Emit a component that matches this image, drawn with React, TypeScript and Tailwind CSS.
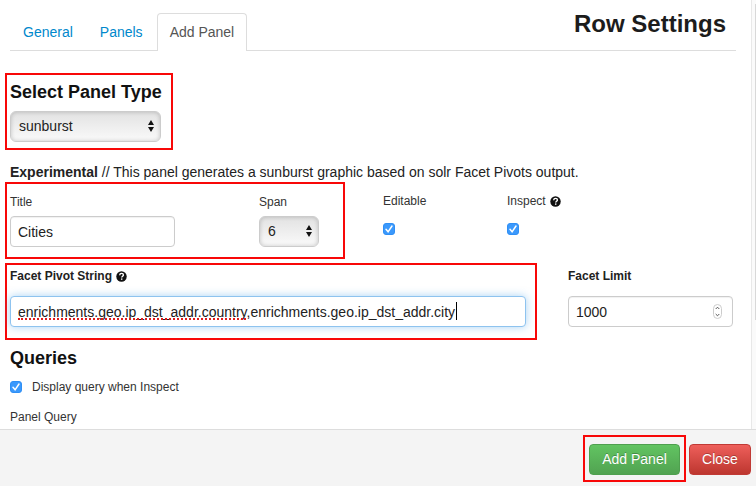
import type { ReactNode } from "react";

const fieldClass =
  "h-[31px] rounded border border-[#cccccc] bg-white px-[7px] text-[14px] text-[#222222] shadow-[inset_0_1px_1px_rgba(0,0,0,0.06)] outline-none";
const labelClass = "block text-[12px] leading-5 text-[#333333]";

function Highlight({ className, children }: { className: string; children: ReactNode }) {
  return <div className={`border-2 border-[#f80808] ${className}`}>{children}</div>;
}

function HelpIcon() {
  return (
    <svg viewBox="0 0 12 12" className="h-[11px] w-[11px]" aria-hidden="true">
      <circle cx="6" cy="6" r="5.7" fill="#111" />
      <path d="M4 4.6C4.1 3.2 5 2.6 6.1 2.6c1.2 0 2 .7 2 1.7 0 1.3-1.9 1.4-1.9 2.8" fill="none" stroke="#fff" strokeWidth="1.5" />
      <path d="M5.4 8.1h1.6v1.5H5.4z" fill="#fff" />
    </svg>
  );
}

function SelectBox({ id, value, className }: { id: string; value: string; className: string }) {
  return (
    <div className={`relative ${className}`}>
      <select
        id={id}
        defaultValue={value}
        className="block h-[31px] w-full appearance-none rounded-md border border-[#cccccc] bg-linear-to-b from-[#e2e2e2] to-[#fafafa] px-2 text-[14px] text-[#222222] shadow-[inset_0_0_4px_rgba(0,0,0,0.2)] outline-none"
      >
        <option>{value}</option>
      </select>
      <svg viewBox="0 0 6 12" className="pointer-events-none absolute top-[9px] right-[7px] h-3 w-[6px]" aria-hidden="true">
        <path d="M0 5 3 0l3 5zM0 7l3 5 3-5z" fill="#111" />
      </svg>
    </div>
  );
}

function CheckBox({ id }: { id: string }) {
  return (
    <span className="relative block h-3 w-3">
      <input
        id={id}
        type="checkbox"
        defaultChecked
        className="block h-3 w-3 appearance-none rounded-[3px] border border-[#b5b5b5] bg-white peer checked:border-[#2f8ff5] checked:bg-[#3b99fc]"
      />
      <svg viewBox="0 0 12 12" className="pointer-events-none absolute inset-0 hidden h-3 w-3 peer-checked:block" aria-hidden="true">
        <path d="M3 6.3 5.1 8.8 9 3" fill="none" stroke="#fff" strokeWidth="1.5" strokeLinecap="round" />
      </svg>
    </span>
  );
}

function Tabs() {
  return (
    <nav className="flex h-[51px] flex-1 items-end border-b border-[#dddddd] pl-[1px] text-[14px]">
      <a href="#general" className="px-3 pb-2 leading-5 text-[#0088cc]">General</a>
      <a href="#panels" className="ml-[3px] px-3 pb-2 leading-5 text-[#0088cc]">Panels</a>
      <a
        href="#add-panel"
        aria-current="page"
        className="-mb-px ml-[2px] h-[38px] rounded-t border border-b-0 border-[#dddddd] bg-white px-3 pt-2 leading-5 text-[#555555]"
      >
        Add Panel
      </a>
      <h1 className="ml-auto pr-[10px] pb-[10px] text-[24px] leading-8 font-bold text-[#1c1c1c]">Row Settings</h1>
    </nav>
  );
}

export default function App() {
  return (
    <div className="flex h-screen flex-col overflow-hidden bg-white font-['Liberation_Sans',Arial,sans-serif] text-[#222222]">
      <div className="flex min-h-0 flex-1">
        <main className="min-w-0 flex-1 overflow-hidden pl-[5px]">
          <div className="flex pr-[15px] pl-[5px]">
            <Tabs />
          </div>

          <Highlight className="mt-[22px] h-[77px] w-[168px] px-[3px] pt-[4px]">
            <label htmlFor="panel-type" className="mb-[6px] block text-[18px] leading-[26px] font-bold whitespace-nowrap text-[#111111]">
              Select Panel Type
            </label>
            <SelectBox id="panel-type" value="sunburst" className="w-[151px]" />
          </Highlight>

          <p className="mt-3 pl-[5px] text-[14px] leading-5">
            <strong>Experimental</strong> // This panel generates a sunburst graphic based on solr Facet Pivots output.
          </p>

          <div className="flex">
            <Highlight className="flex h-[77px] w-[340px] px-[3px] pt-[8px]">
              <div className="w-[249px]">
                <label htmlFor="title" className={`mb-[4px] ${labelClass}`}>Title</label>
                <input id="title" type="text" defaultValue="Cities" className={`${fieldClass} block w-[165px]`} />
              </div>
              <div>
                <label htmlFor="span" className={`mb-[4px] ${labelClass}`}>Span</label>
                <SelectBox id="span" value="6" className="w-[60px]" />
              </div>
            </Highlight>
            <div className="ml-[38px] w-[124px] pt-[9px]">
              <label htmlFor="editable" className={`mb-3 ${labelClass}`}>Editable</label>
              <CheckBox id="editable" />
            </div>
            <div className="pt-[9px]">
              <label htmlFor="inspect" className="mb-3 flex items-center gap-1 text-[12px] leading-5 text-[#333333]">
                Inspect <HelpIcon />
              </label>
              <CheckBox id="inspect" />
            </div>
          </div>

          <div className="mt-[4px] flex justify-between pr-[18px]">
            <Highlight className="h-[77px] w-[532px] px-[3px] pt-[1px]">
              <label htmlFor="pivot" className="mb-[10px] flex items-center gap-1 text-[12px] leading-5 font-bold">
                Facet Pivot String <HelpIcon />
              </label>
              <div className="relative w-[516px]">
                <input
                  id="pivot"
                  type="text"
                  spellCheck={false}
                  defaultValue="enrichments.geo.ip_dst_addr.country,enrichments.geo.ip_dst_addr.city"
                  className="block h-[31px] w-full rounded border border-[#8ec3ef] bg-white px-[7px] text-[14px] text-[#222222] shadow-[0_0_8px_rgba(82,168,236,0.5)] outline-none"
                />
                <span className="pointer-events-none absolute bottom-[7px] left-2 w-[228px] border-b-2 border-dotted border-[#e01b1b]" />
                <span className="pointer-events-none absolute top-[6px] left-[446px] h-[18px] w-px bg-black" />
              </div>
            </Highlight>
            <div className="pt-[3px]">
              <label htmlFor="limit" className="mb-[10px] block text-[12px] leading-5 font-bold">Facet Limit</label>
              <div className="relative">
                <input
                  id="limit"
                  type="number"
                  defaultValue={1000}
                  className={`${fieldClass} block w-[165px] [appearance:textfield]`}
                />
                <svg viewBox="0 0 9 15" className="pointer-events-none absolute top-2 right-[11px] h-[15px] w-[9px]" aria-hidden="true">
                  <rect x=".5" y=".5" width="8" height="14" rx="4" fill="#fff" stroke="#ccc" />
                  <path d="m2.7 5 1.8-1.8L6.3 5M2.7 10l1.8 1.8L6.3 10" fill="none" stroke="#555" />
                </svg>
              </div>
            </div>
          </div>

          <section className="pt-[5px] pl-[5px]">
            <h2 className="text-[18px] leading-[26px] font-bold text-[#111111]">Queries</h2>
            <div className="mt-[6px] flex items-center gap-[10px]">
              <CheckBox id="show-query" />
              <label htmlFor="show-query" className={labelClass}>Display query when Inspect</label>
            </div>
            <p className={`mt-[10px] ${labelClass}`}>Panel Query</p>
          </section>
        </main>
        <div className="flex w-[5px] justify-end border-l border-[#e8e8e8] bg-[#fafafa] pt-1">
          <div className="h-[316px] w-px bg-[#d8d8d8]" />
        </div>
      </div>

      <footer className="flex h-[57px] items-start justify-end gap-[3px] border-t border-[#dddddd] bg-[#f4f4f4] pt-[5px] pr-[5px] text-[14px] text-white">
        <Highlight className="h-[47px] px-[4px] pt-[7px]">
          <button
            type="button"
            className="block h-[31px] w-[91px] rounded border border-[#4fa04f] bg-linear-to-b from-[#62c462] to-[#51a351] [text-shadow:0_-1px_0_rgba(0,0,0,0.25)]"
          >
            Add Panel
          </button>
        </Highlight>
        <button
          type="button"
          className="mt-[9px] h-[31px] w-[62px] rounded border border-[#c03a35] bg-linear-to-b from-[#ee5f5b] to-[#bd362f] [text-shadow:0_-1px_0_rgba(0,0,0,0.25)]"
        >
          Close
        </button>
      </footer>
    </div>
  );
}
